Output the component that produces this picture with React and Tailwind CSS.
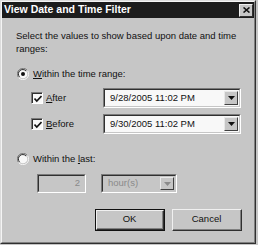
import React from "react";

const font = { fontFamily: '"Liberation Sans", Arial, sans-serif' };

const Radio = ({ checked }) => (
  <svg width="12" height="12" viewBox="0 0 12 12" className="shrink-0">
    <path d="M10.5 2.5 A5.2 5.2 0 0 0 1.5 9.5" fill="none" stroke="#7a7a7a" strokeWidth="1" />
    <path d="M1.5 9.5 A5.2 5.2 0 0 0 10.5 2.5" fill="none" stroke="#f4f4f4" strokeWidth="1" />
    <circle cx="6" cy="6" r="4.3" fill="#f8f8f8" />
    <path d="M9 3 A4.2 4.2 0 0 0 2.5 8.8" fill="none" stroke="#303030" strokeWidth="1" />
    {checked && <circle cx="6" cy="6" r="2" fill="#111" />}
  </svg>
);

const Check = () => (
  <div className="w-[12px] h-[12px] shrink-0 border-t border-l border-t-[#7a7a7a] border-l-[#7a7a7a] border-r border-b border-r-white border-b-white">
    <div className="w-full h-full bg-[#f8f8f8] border-t border-l border-t-[#303030] border-l-[#303030] flex items-center justify-center">
      <svg width="8" height="8" viewBox="0 0 8 8">
        <path d="M0.5 3.5 L2.8 6 L7.5 1" fill="none" stroke="#111" strokeWidth="1.6" />
      </svg>
    </div>
  </div>
);

const DropBtn = ({ disabled }) => (
  <div className="w-[14px] h-full shrink-0 bg-[#c6c6c6] border border-t-[#e8e8e8] border-l-[#e8e8e8] border-r-[#404040] border-b-[#404040] flex items-center justify-center">
    <svg width="7" height="4" viewBox="0 0 7 4">
      <path d="M0 0 H7 L3.5 4 Z" fill={disabled ? "#8a8a8a" : "#111"} />
    </svg>
  </div>
);

const Combo = ({ value, disabled, className }) => (
  <div className={`h-full border border-t-[#7a7a7a] border-l-[#7a7a7a] border-r-white border-b-white ${className}`}>
    <div className={`h-full flex items-stretch border border-t-[#303030] border-l-[#303030] border-r-[#c6c6c6] border-b-[#c6c6c6] p-[1px] ${disabled ? "bg-[#c6c6c6]" : "bg-[#f8f8f8]"}`}>
      <span className={`flex-1 flex items-center pl-[4px] ${disabled ? "text-[#8a8a8a]" : "text-[#111]"}`}>{value}</span>
      <DropBtn disabled={disabled} />
    </div>
  </div>
);

const Button = ({ children, isDefault }) => (
  <div className={`w-[70px] h-[22px] ${isDefault ? "border border-[#111]" : ""}`}>
    <div className="w-full h-full bg-[#c6c6c6] border border-t-[#f0f0f0] border-l-[#f0f0f0] border-r-[#303030] border-b-[#303030]">
      <div className="w-full h-full border-r border-b border-r-[#808080] border-b-[#808080] flex items-center justify-center text-[#111]">
        {children}
      </div>
    </div>
  </div>
);

export default function App() {
  return (
    <div className="w-[258px] h-[245px] bg-[#c6c6c6]" style={font}>
      <div className="w-[256px] h-[244px] border border-t-[#dcdcdc] border-l-[#dcdcdc] border-r-[#303030] border-b-[#303030]">
        <div className="w-full h-full flex flex-col bg-[#c6c6c6] border border-t-[#f4f4f4] border-l-[#f4f4f4] border-r-[#808080] border-b-[#808080] text-[9.5px] text-[#111]">
          {/* title bar */}
          <div className="h-[16px] bg-[#1c1c1c] flex items-center justify-between pl-[2px] pr-[1px]">
            <span className="text-white font-bold text-[10.5px]">View Date and Time Filter</span>
            <div className="w-[14px] h-[13px] bg-[#c6c6c6] border border-t-[#f0f0f0] border-l-[#f0f0f0] border-r-[#303030] border-b-[#303030] flex items-center justify-center">
              <svg width="7" height="6" viewBox="0 0 7 6">
                <path d="M0.5 0.5 L6.5 5.5 M6.5 0.5 L0.5 5.5" stroke="#111" strokeWidth="1.6" />
              </svg>
            </div>
          </div>

          <div className="flex flex-col pl-[14px]">
            <p className="mt-[11px] leading-[13px] w-[228px]">
              Select the values to show based upon date and time ranges:
            </p>

            <div className="mt-[12px] h-[14px] flex items-center gap-[4px] pl-[1px]">
              <Radio checked />
              <span>
                <span className="underline">W</span>ithin the time range:
              </span>
            </div>

            <div className="mt-[7px] h-[20px] flex items-center pl-[15px]">
              <Check />
              <span className="ml-[3px] w-[57px]">
                <span className="underline">A</span>fter
              </span>
              <Combo value="9/28/2005 11:02 PM" className="w-[138px]" />
            </div>

            <div className="mt-[6px] h-[20px] flex items-center pl-[15px]">
              <Check />
              <span className="ml-[3px] w-[57px]">
                <span className="underline">B</span>efore
              </span>
              <Combo value="9/30/2005 11:02 PM" className="w-[138px]" />
            </div>

            <div className="mt-[18px] h-[14px] flex items-center gap-[4px] pl-[1px]">
              <Radio />
              <span>
                Within the <span className="underline">l</span>ast:
              </span>
            </div>

            <div className="mt-[8px] h-[19px] flex items-center pl-[21px] gap-[15px]">
              <div className="w-[49px] h-full border border-t-[#7a7a7a] border-l-[#7a7a7a] border-r-white border-b-white">
                <div className="h-full border border-t-[#303030] border-l-[#303030] border-r-[#c6c6c6] border-b-[#c6c6c6] flex items-center justify-end pr-[4px] text-[#8a8a8a]">
                  2
                </div>
              </div>
              <Combo value="hour(s)" disabled className="w-[76px]" />
            </div>

            <div className="mt-[16px] flex justify-end gap-[7px] pr-[12px]">
              <Button isDefault>OK</Button>
              <Button>Cancel</Button>
            </div>
          </div>
        </div>
      </div>
    </div>
  );
}
